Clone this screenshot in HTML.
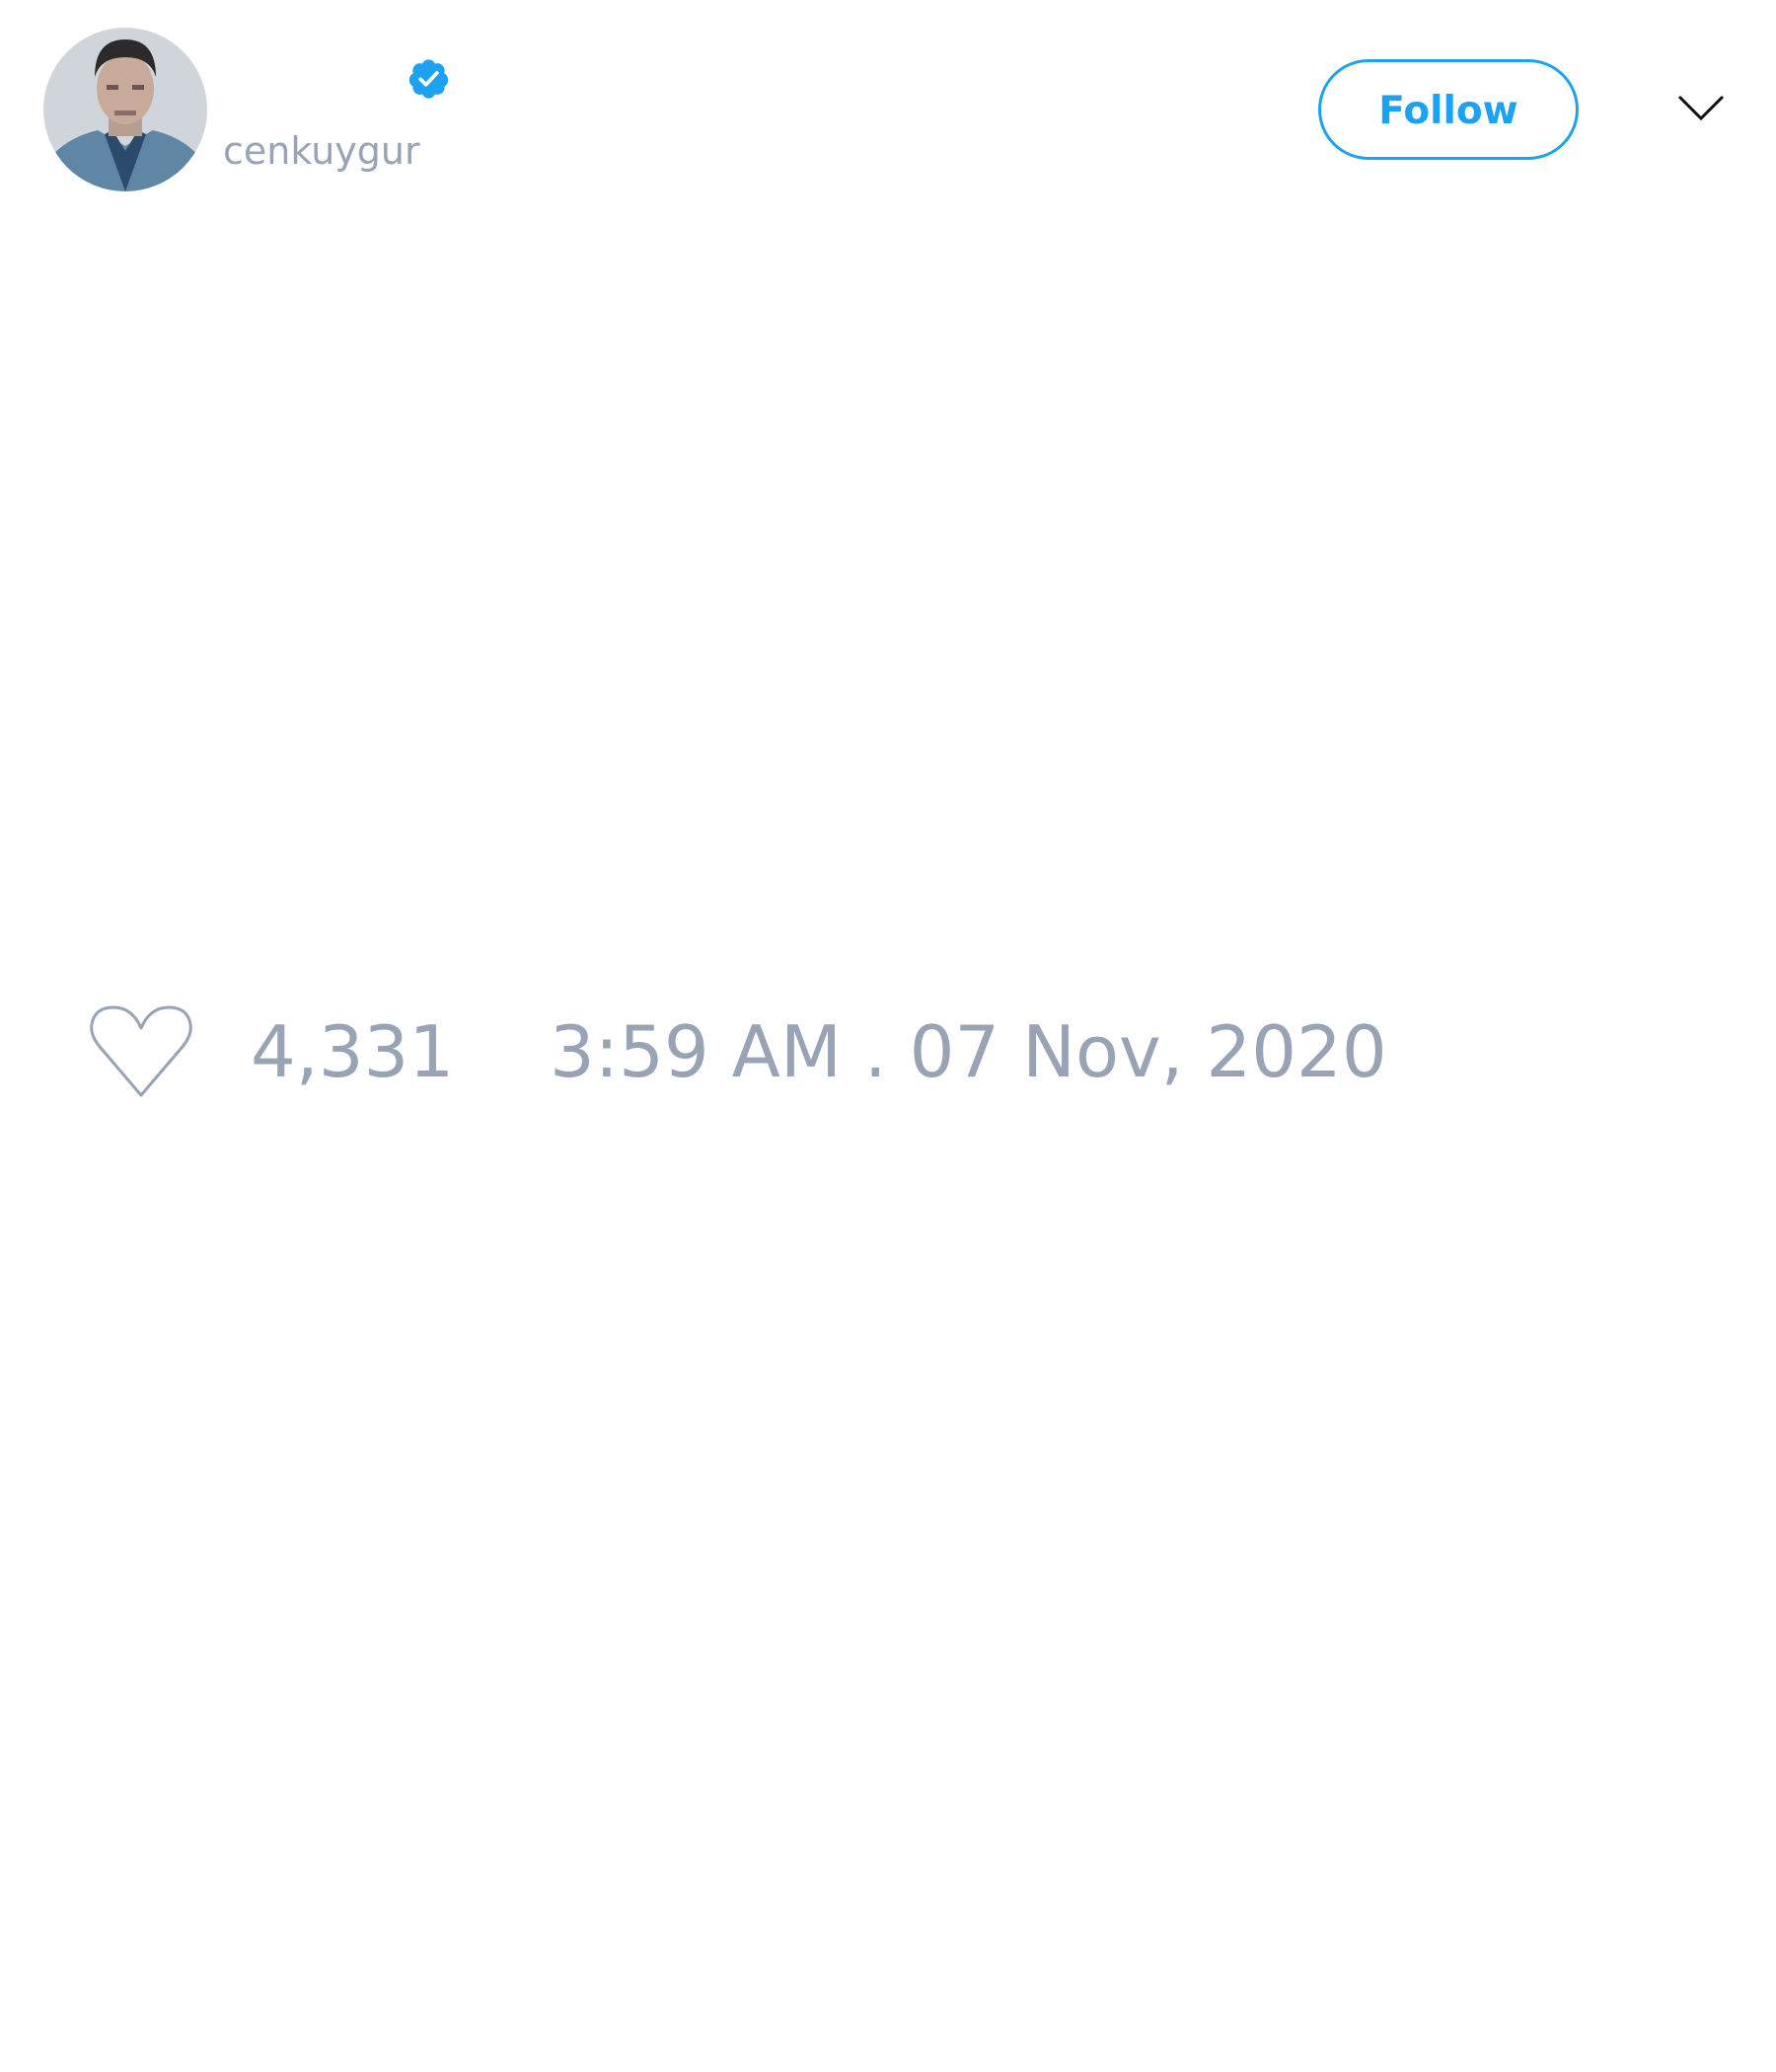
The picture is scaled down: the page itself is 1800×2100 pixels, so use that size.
<!DOCTYPE html>
<html><head><meta charset="utf-8"><style>
html,body{margin:0;padding:0;background:#fff;width:1800px;height:2100px;overflow:hidden;font-family:"DejaVu Sans","Liberation Sans",sans-serif;}
.abs{position:absolute;}
</style></head><body>
<svg class="abs" style="left:44px;top:28px" width="166" height="166" viewBox="0 0 166 166">
<defs><clipPath id="c"><circle cx="83" cy="83" r="83"/></clipPath></defs>
<g clip-path="url(#c)">
<rect width="166" height="166" fill="#cfd5da"/>
<path d="M0 140 Q20 112 55 104 L83 120 L111 104 Q146 112 166 140 L166 166 L0 166Z" fill="#5f86a4"/>
<path d="M62 108 L83 166 L104 108 L96 104 L83 125 L70 104Z" fill="#2c4a6a"/>
<rect x="66" y="80" width="34" height="30" fill="#b79e92"/>
<ellipse cx="83" cy="62" rx="29" ry="36" fill="#c8aa9a"/>
<path d="M52 50 Q52 12 83 12 Q114 12 114 50 Q108 30 83 30 Q58 30 52 50Z" fill="#2d2a2c"/>
<rect x="64" y="58" width="12" height="5" fill="#6a5550"/>
<rect x="90" y="58" width="12" height="5" fill="#6a5550"/>
<rect x="72" y="84" width="22" height="5" fill="#8d6b66"/>
</g></svg>
<svg class="abs" style="left:412px;top:57px" width="45" height="46" viewBox="0 0 24 24">
<path fill="#1da1f2" d="M22.5 12.5c0-1.58-.875-2.950-2.148-3.6.154-.435.238-.905.238-1.4 0-2.21-1.710-3.998-3.818-3.998-.47 0-.92.084-1.336.25C14.818 2.415 13.51 1.5 12 1.5s-2.816.917-3.437 2.25c-.415-.165-.866-.25-1.336-.25-2.11 0-3.818 1.79-3.818 4 0 .494.083.964.237 1.4-1.272.65-2.147 2.018-2.147 3.6 0 1.495.782 2.798 1.942 3.486-.02.17-.032.34-.032.514 0 2.21 1.708 4 3.818 4 .47 0 .92-.086 1.335-.25.62 1.334 1.926 2.25 3.437 2.25 1.512 0 2.818-.916 3.437-2.25.415.163.865.248 1.336.248 2.11 0 3.818-1.790 3.818-4 0-.174-.012-.344-.033-.513 1.158-.687 1.943-1.990 1.943-3.484z"/>
<path d="M7.6 12.2l2.9 2.9 5.9-6.3" stroke="#fff" stroke-width="2" fill="none" stroke-linecap="round" stroke-linejoin="round"/>
</svg>
<div class="abs" style="left:226px;top:134px;font-size:38px;color:#98a3b6;line-height:1">cenkuygur</div>
<div class="abs" style="left:1336px;top:60px;width:258px;height:96px;border:3px solid #1da1f2;border-radius:51px;color:#1da1f2;font-weight:bold;font-size:39px;display:flex;align-items:center;justify-content:center;padding-top:3px;box-sizing:content-box;height:93px;">Follow</div>
<svg class="abs" style="left:1700px;top:94px" width="48" height="32" viewBox="0 0 48 32"><path d="M2 4 L24 26 L46 4" stroke="#111" stroke-width="3" fill="none"/></svg>
<svg class="abs" style="left:88px;top:1016px" width="110" height="100" viewBox="0 0 110 100">
<path d="M55 94 L14 46 Q3 33 5 22 Q8 5 27 5 Q46 5 55 26 Q64 5 83 5 Q102 5 105 22 Q107 33 96 46 Z" stroke="#98a3b6" stroke-width="3" fill="none" stroke-linejoin="round"/>
</svg>
<div class="abs" style="left:254px;top:1030px;font-size:72px;color:#98a3b6;line-height:1;white-space:nowrap">4,331</div>
<div class="abs" style="left:557px;top:1030px;font-size:72px;color:#98a3b6;line-height:1;white-space:nowrap">3:59 AM . 07 Nov, 2020</div>
</body></html>
